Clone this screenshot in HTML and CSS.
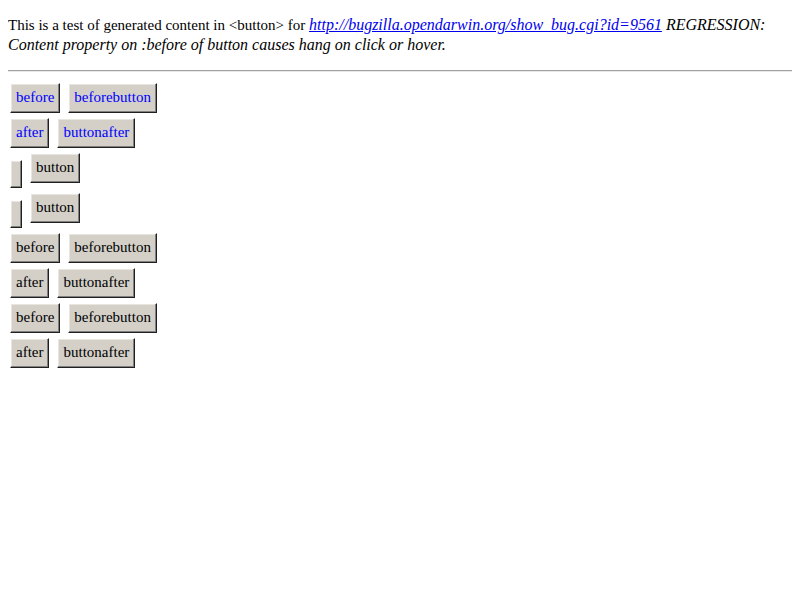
FILE: index.html
```html
<!DOCTYPE html>
<html>
<head>
<meta charset="utf-8">
<link rel="stylesheet" href="styles.css">
</head>
<body>
<p class="intro"><span class="lead">This is a test of generated content in &lt;button&gt; for </span><i class="note"><a href="#">http://bugzilla.opendarwin.org/show_bug.cgi?id=9561</a> REGRESSION: Content property on :before of button causes hang on click or hover.</i></p>
<hr class="rule">
<div class="rows">
  <div class="row"><span class="btn blue">before</span><span class="btn blue">beforebutton</span></div>
  <div class="row"><span class="btn blue">after</span><span class="btn blue">buttonafter</span></div>
  <div class="row tall"><span class="btn empty"></span><span class="btn">button</span></div>
  <div class="row tall"><span class="btn empty"></span><span class="btn">button</span></div>
  <div class="row"><span class="btn">before</span><span class="btn">beforebutton</span></div>
  <div class="row"><span class="btn">after</span><span class="btn">buttonafter</span></div>
  <div class="row"><span class="btn">before</span><span class="btn">beforebutton</span></div>
  <div class="row"><span class="btn">after</span><span class="btn">buttonafter</span></div>
</div>
</body>
</html>
```
FILE: styles.css
```css
body {
  margin: 8px;
  font-family: "Liberation Serif", serif;
  font-size: 16px;
  color: #000;
  background: #fff;
}
.intro {
  margin: 7px 0 16px;
  line-height: 19px;
}
.lead {
  font-size: 15px;
}
.note {
  font-size: 16px;
}
.intro a {
  color: #0000ee;
}
.rule {
  margin: 0;
  border: none;
  border-top: 1px solid #a0a0a0;
  border-bottom: 1px solid #e8e8e8;
}
.rows {
  display: flex;
  flex-direction: column;
  gap: 5px;
  margin-top: 11px;
  padding-left: 2px;
}
.row {
  display: flex;
  align-items: flex-start;
  gap: 8px;
}
.row.tall {
  height: 35px;
}
.btn {
  display: block;
  box-sizing: border-box;
  height: 30px;
  line-height: 20px;
  padding: 3px 5px;
  font-size: 15px;
  background: #d4d0c8;
  border: 1px solid;
  border-color: #fff #202020 #202020 #fff;
  box-shadow: inset -1px -1px #808080, inset 1px 1px #e8e6e0;
  color: #000;
  white-space: nowrap;
}
.btn.blue {
  color: #0000ff;
}
.btn.empty {
  width: 12px;
  height: 28px;
  margin-top: 7px;
  padding: 0;
}
```
